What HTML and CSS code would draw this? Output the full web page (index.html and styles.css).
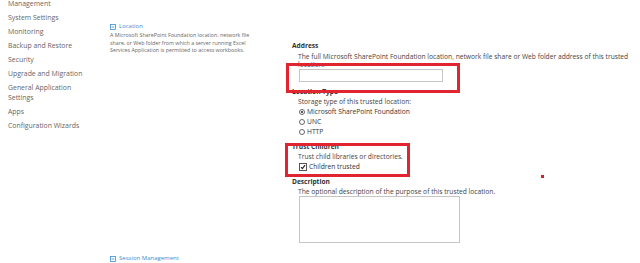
FILE: index.html
```html
<!DOCTYPE html>
<html>
<head>
<meta charset="utf-8">
<link rel="stylesheet" href="styles.css">
</head>
<body>
<div class="page">
  <ul class="nav">
    <li>Management</li>
    <li>System Settings</li>
    <li>Monitoring</li>
    <li>Backup and Restore</li>
    <li>Security</li>
    <li>Upgrade and Migration</li>
    <li>General Application Settings</li>
    <li>Apps</li>
    <li>Configuration Wizards</li>
  </ul>
  <div class="mid">
    <div class="group">
      <div class="group-title"><svg class="toggle" viewBox="0 0 6 6" width="6" height="6"><rect x="0.5" y="0.5" width="5" height="5" fill="none" stroke="#3b8ed3" stroke-width="0.8"/><line x1="1.6" y1="3" x2="4.4" y2="3" stroke="#3b8ed3" stroke-width="0.8"/></svg>Location</div>
      <p class="group-desc">A Microsoft SharePoint Foundation location, network file share, or Web folder from which a server running Excel Services Application is permitted to access workbooks.</p>
    </div>
    <div class="group group-last">
      <div class="group-title"><svg class="toggle" viewBox="0 0 6 6" width="6" height="6"><rect x="0.5" y="0.5" width="5" height="5" fill="none" stroke="#3b8ed3" stroke-width="0.8"/><line x1="1.6" y1="3" x2="4.4" y2="3" stroke="#3b8ed3" stroke-width="0.8"/></svg>Session Management</div>
    </div>
  </div>
  <div class="form">
    <div class="sec sec-address">
      <div class="sec-title">Address</div>
      <div class="sec-body">
        <p class="help">The full Microsoft SharePoint Foundation location, network file share or Web folder address of this trusted location.</p>
        <div class="input"></div>
      </div>
    </div>
    <div class="sec">
      <div class="sec-title">Location Type</div>
      <div class="sec-body">
        <p class="help line">Storage type of this trusted location:</p>
        <div class="opt"><span class="radio on"></span>Microsoft SharePoint Foundation</div>
        <div class="opt"><span class="radio"></span>UNC</div>
        <div class="opt"><span class="radio"></span>HTTP</div>
      </div>
    </div>
    <div class="sec">
      <div class="sec-title">Trust Children</div>
      <div class="sec-body">
        <p class="help line">Trust child libraries or directories.</p>
        <div class="opt"><span class="check"><svg viewBox="0 0 6 6" width="6" height="6"><path d="M1 3.2 L2.4 4.6 L5 1.2" fill="none" stroke="#222" stroke-width="1.1"/></svg></span>Children trusted</div>
      </div>
    </div>
    <div class="sec">
      <div class="sec-title">Description</div>
      <div class="sec-body">
        <p class="help line">The optional description of the purpose of this trusted location.</p>
        <div class="textarea"></div>
      </div>
    </div>
    <div class="mark mark-1"></div>
    <div class="mark mark-2"></div>
    <div class="dot"></div>
  </div>
</div>
</body>
</html>
```
FILE: styles.css
```css
html, body {
  margin: 0;
  padding: 0;
  background: #fff;
  overflow: hidden;
}
body {
  font-family: "Open Sans", "Noto Sans", sans-serif;
  color: #444;
}
.page {
  display: flex;
  align-items: flex-start;
  padding-left: 8px;
  height: 263px;
}
.nav {
  list-style: none;
  margin: -3px 0 0 0;
  padding: 0;
  width: 102px;
  flex: none;
}
.nav li {
  font-size: 6.9px;
  line-height: 10px;
  padding: 2px 0;
  color: #666;
  width: 76px;
}
.mid {
  width: 176px;
  flex: none;
  padding-top: 22px;
  display: flex;
  flex-direction: column;
  height: 241px;
}
.group-title {
  font-size: 6px;
  line-height: 9px;
  color: #3b8ed3;
  display: flex;
  align-items: center;
  gap: 3px;
}
.toggle {
  flex: none;
}
.group-desc {
  margin: 1px 0 0 0;
  font-size: 5.3px;
  line-height: 7.5px;
  color: #666;
  width: 152px;
}
.group-last {
  margin-top: auto;
}
.form {
  position: relative;
  flex: 1;
  padding-top: 41px;
  padding-left: 6px;
}
.sec-title {
  font-size: 6.6px;
  line-height: 10px;
  font-weight: bold;
  color: #333;
}
.sec-body {
  padding-left: 6px;
}
.help {
  margin: 2px 0 0 0;
  font-size: 6.7px;
  line-height: 7.7px;
  color: #444;
  width: 332px;
}
.help.line {
  margin: 0;
  line-height: 10px;
}
.input {
  margin-top: 1px;
  margin-left: 1px;
  width: 142px;
  height: 11px;
  border: 1px solid #c6c6c6;
}
.sec + .sec {
  margin-top: 5px;
}
.opt {
  font-size: 6.7px;
  line-height: 10px;
  color: #333;
  display: flex;
  align-items: center;
  gap: 2px;
}
.radio {
  width: 4px;
  height: 4px;
  border: 0.8px solid #666;
  border-radius: 50%;
  position: relative;
  flex: none;
  margin-left: 1px;
}
.radio.on::after {
  content: "";
  position: absolute;
  left: 1px;
  top: 1px;
  width: 2px;
  height: 2px;
  border-radius: 50%;
  background: #222;
}
.check {
  width: 6px;
  height: 6px;
  border: 1px solid #555;
  flex: none;
  display: flex;
  margin-left: 1px;
}
.textarea {
  margin-top: -1px;
  margin-left: 1px;
  width: 159px;
  height: 45px;
  border: 1px solid #c6c6c6;
}
.mark {
  position: absolute;
  border: 3px solid #e02530;
}
.mark-1 {
  left: 0;
  top: 63px;
  width: 168px;
  height: 24px;
}
.mark-2 {
  left: -1px;
  top: 143px;
  width: 119px;
  height: 28px;
}
.dot {
  position: absolute;
  left: 255px;
  top: 175px;
  width: 3px;
  height: 3px;
  background: #d61f2a;
}
```
